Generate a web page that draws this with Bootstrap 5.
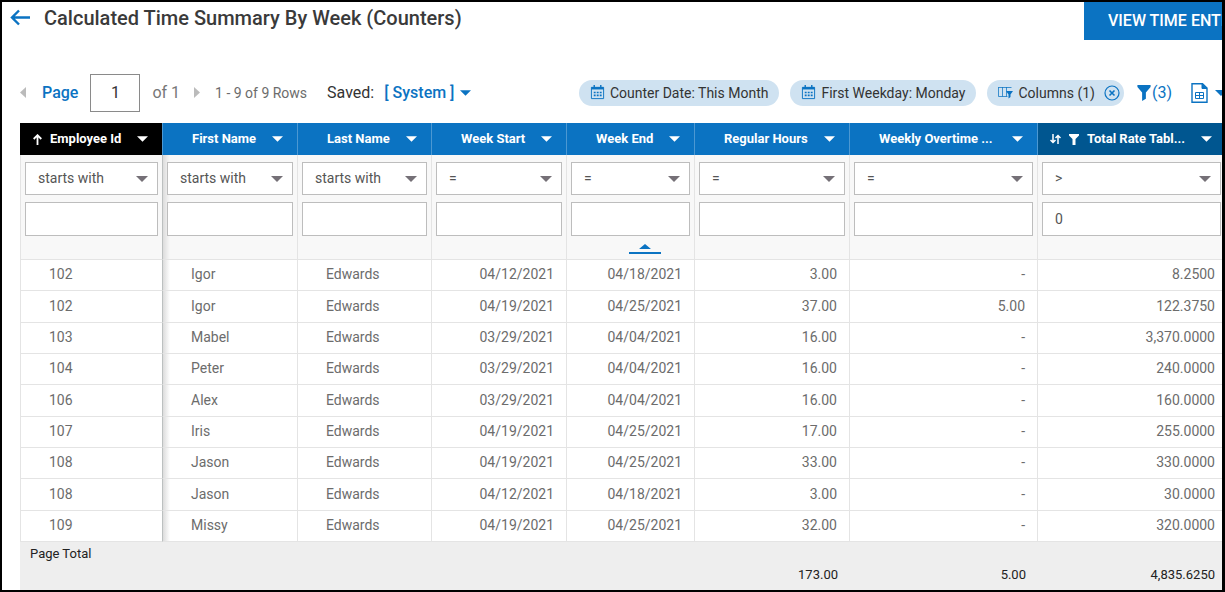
<!DOCTYPE html>
<html lang="en">
<head>
<meta charset="utf-8">
<meta name="viewport" content="width=device-width, initial-scale=1">
<title>Calculated Time Summary By Week (Counters)</title>
<link href="https://cdn.jsdelivr.net/npm/bootstrap@5.3.0/dist/css/bootstrap.min.css" rel="stylesheet">
<style>
:root { --brand: #0b73c2; --brand-dark: #005690; --rule: #e4e4e4; --muted: #6c6c6c; }
body { font-family: Roboto, "Liberation Sans", sans-serif; font-size: 14px; line-height: 20px; color: #333; }
.frame { border: 2px solid #000; border-right-width: 3px; min-height: 100vh; overflow: hidden; }
.page-head { height: 38px; }
.page-title { font-size: 20px; line-height: 33px; font-weight: 500; color: #3a3a3a; }
.action-slot { width: 138px; overflow: hidden; }
.btn-action { --bs-btn-color: #fff; --bs-btn-bg: var(--brand); --bs-btn-border-color: var(--brand); --bs-btn-hover-color: #fff; --bs-btn-hover-bg: var(--brand-dark); --bs-btn-border-radius: 0; --bs-btn-font-weight: 500; --bs-btn-font-size: 16px; --bs-btn-padding-x: 23px; --bs-btn-padding-y: 0; height: 38px; }
.tools { margin-top: 33px; margin-bottom: 11px; height: 39px; }
.tools-left { font-size: 16px; }
.btn-bare { border: 0; background: none; padding: 0; color: inherit; display: inline-flex; align-items: center; flex-shrink: 0; }
.brand { color: var(--brand); text-decoration: none; }
.strong-text { font-weight: 500; }
.page-box { width: 50px; height: 38px; border: 1px solid #8a8a8a; border-radius: 0; padding: 0; margin: 0 12px; text-align: center; font-size: 16px; color: #333; }
.row-of { color: #777; }
.next-page { margin: 0 14px; }
.row-count { font-size: 14px; color: var(--muted); margin-right: 20px; }
.saved-label { margin-right: 10px; }
.saved-menu { gap: 6px; }
.chip { height: 26px; border-radius: 13px; background: #cfe2f1; padding: 0 11px; gap: 5px; color: #333; white-space: nowrap; font-size: 14px; }
.chips { gap: 11px; }
.filter-btn { font-size: 16px; gap: 1px; margin: 0 19px 0 13px; }
.menu-slot { width: 31px; overflow: hidden; gap: 7px; }
.grid-wrap { padding-left: 18px; }
.grid { table-layout: fixed; width: 100%; border-collapse: separate; border-spacing: 0; margin: 0; }
.grid th, .grid td { padding: 0; }
.grid thead .heads th { height: 32px; background: var(--brand); color: #fff; font-weight: 700; font-size: 13px; border-left: 1px solid #4c98d2; }
.grid thead .heads th.sorted { background: #000; border-left-color: #000; }
.grid thead .heads th.filtered { background: var(--brand-dark); }
.head-in { padding: 0 14px 0 29px; white-space: nowrap; }
.sorted .head-in { padding-left: 12px; }
.filtered .head-in { padding: 0 10px 0 12px; }
.filters td { height: 105px; background: #f8f8f8; border-left: 1px solid var(--rule); border-bottom: 1px solid var(--rule); vertical-align: top; position: relative; }
.filter-in { padding: 7px 4px 0; display: grid; gap: 7px; }
.filters td:last-child .filter-in { padding-right: 1px; }
.filters .form-select, .filters .form-control { border: 1px solid #bdbdbd; border-radius: 0; font-size: 14px; line-height: 20px; color: #555; padding: 0 12px 1px; background-color: #fff; }
.filters .form-select { height: 33px; background-image: url("data:image/svg+xml,%3csvg xmlns='http://www.w3.org/2000/svg' viewBox='0 0 12 6'%3e%3cpath d='M0 0h12L6 6z' fill='%23757077'/%3e%3c/svg%3e"); background-size: 12px 6px; background-position: right 9px center; }
.filters .form-control { height: 34px; }
.drop-mark { position: absolute; right: 33px; bottom: 5px; }
.rows td { height: 31px; padding: 0 12px 2px 28px; border-left: 1px solid var(--rule); border-bottom: 1px solid var(--rule); color: var(--muted); vertical-align: middle; }
.rows tr:nth-child(3n+2) td { height: 32px; }
.grid tr > .num { text-align: right; }
.grid tr > .num:last-child { padding-right: 7px; }
.filters td:nth-child(2), .rows td:nth-child(2) { border-left-color: #bcc0c0; background-image: linear-gradient(90deg, #dcdcdc, #fff0 7px); }
.totals td { background: #eee; color: #222; height: 22px; font-size: 13px; }
.totals .total-label { padding: 1px 0 0 10px; }
.totals .num { padding: 0 11px 5px 0; height: 26px; vertical-align: bottom; }
</style>
</head>
<body>
<div class="frame">
  <header class="page-head d-flex align-items-start ps-2">
    <a class="brand d-flex mt-1 me-2" href="#" aria-label="Back">
      <svg width="22" height="22" viewBox="0 0 22 22" fill="none" stroke="currentColor" stroke-width="2.4"><path d="M20 11.500H2M9 4.500L2 11.500l7 7"/></svg>
    </a>
    <h1 class="page-title mb-0 ms-1">Calculated Time Summary By Week (Counters)</h1>
    <div class="action-slot ms-auto"><button type="button" class="btn btn-action text-nowrap">VIEW TIME ENTRIES</button></div>
  </header>

  <div class="tools d-flex align-items-center ps-3">
    <div class="tools-left d-flex align-items-center">
      <button type="button" class="btn-bare me-3" aria-label="Previous page"><svg width="8" height="12" viewBox="0 0 8 12"><path d="M8 0v11L2 5.500z" fill="#bbb"/></svg></button>
      <label class="brand strong-text" for="pageNo">Page</label>
      <input id="pageNo" class="page-box" type="text" value="1">
      <span class="row-of">of 1</span>
      <button type="button" class="btn-bare next-page" aria-label="Next page"><svg width="7" height="12" viewBox="0 0 7 12"><path d="M0 0v11l6-5.500z" fill="#bbb"/></svg></button>
      <span class="row-count">1 - 9 of 9 Rows</span>
      <span class="saved-label">Saved:</span>
      <button type="button" class="btn-bare brand strong-text saved-menu">[ System ]<svg width="11" height="6" viewBox="0 0 12 6"><path d="M0 0h12L6 6z" fill="currentColor"/></svg></button>
    </div>
    <div class="d-flex align-items-center ms-auto">
      <div class="chips d-flex align-items-center">
        <button type="button" class="btn-bare chip"><svg class="brand" width="15" height="15" viewBox="0 0 16 16" fill="none" stroke="currentColor"><path d="M1.500 2.500h13v12h-13z"/><path d="M1.500 3.500h13" stroke-width="2.500"/><path d="M4.500 0v3M11.500 0v3" stroke-width="1.500"/><path d="M4 8h8.500M4 11h8.500" stroke-width="1.800" stroke-dasharray="2 1.200"/></svg>Counter Date: This Month</button>
        <button type="button" class="btn-bare chip"><svg class="brand" width="15" height="15" viewBox="0 0 16 16" fill="none" stroke="currentColor"><path d="M1.500 2.500h13v12h-13z"/><path d="M1.500 3.500h13" stroke-width="2.500"/><path d="M4.500 0v3M11.500 0v3" stroke-width="1.500"/><path d="M4 8h8.500M4 11h8.500" stroke-width="1.800" stroke-dasharray="2 1.200"/></svg>First Weekday: Monday</button>
        <div class="chip d-flex align-items-center pe-1">
          <svg class="brand" width="15" height="14" viewBox="0 0 15 14" fill="none" stroke="currentColor"><path d="M.5 1.500h13M.5 1v9.500h9M4.500 1v9.500M8.500 1v9.500" opacity=".75"/><path d="M8 5h7l-2.500 3.500V11l-2 1.500v-4z" fill="currentColor" stroke="none"/></svg>
          <button type="button" class="btn-bare">Columns (1)</button>
          <button type="button" class="btn-bare brand ms-1" aria-label="Remove columns filter"><svg width="16" height="16" viewBox="0 0 16 16" fill="none" stroke="currentColor" stroke-width="1.200"><circle cx="8" cy="8" r="7"/><path d="M5.500 5.500l5 5M10.500 5.500l-5 5" stroke-width="1.600"/></svg></button>
        </div>
      </div>
      <button type="button" class="btn-bare brand filter-btn"><svg width="14" height="16" viewBox="0 0 14 17" fill="currentColor"><path d="M0 0h14v2L9 8v6.500L5 17V8L0 2z"/></svg>(3)</button>
      <button type="button" class="btn-bare brand menu-slot justify-content-start" aria-label="Export"><svg class="flex-shrink-0" width="17" height="20" viewBox="0 0 17 20" fill="none" stroke="currentColor"><path d="M1 .7h10.500L16 5v14.300H1z" stroke-width="1.400"/><path d="M11 .7V5.500h5z" fill="currentColor"/><path d="M4.500 9.500h8v6h-8zM4.500 12.500h8M8.500 9.500v6"/></svg><svg class="flex-shrink-0" width="12" height="6" viewBox="0 0 12 6"><path d="M0 0h12L6 6z" fill="currentColor"/></svg></button>
    </div>
  </div>

  <div class="grid-wrap">
  <table class="grid">
    <colgroup><col style="width:142px"><col style="width:135px"><col style="width:134px"><col style="width:135px"><col style="width:128px"><col style="width:155px"><col style="width:188px"><col></colgroup>
    <thead>
      <tr class="heads" id="heads"></tr>
      <tr class="filters" id="filters"></tr>
    </thead>
    <tbody class="rows" id="rows"></tbody>
    <tfoot class="totals">
      <tr><td colspan="8" class="total-label">Page Total</td></tr>
      <tr><td colspan="5"></td><td class="num">173.00</td><td class="num">5.00</td><td class="num">4,835.6250</td></tr>
    </tfoot>
  </table>
  </div>
</div>
<script src="https://cdn.jsdelivr.net/npm/bootstrap@5.3.0/dist/js/bootstrap.bundle.min.js"></script>
<script>
const columns = [
  ['Employee Id', 'starts with', ''], ['First Name', 'starts with', ''], ['Last Name', 'starts with', ''],
  ['Week Start', '=', ''], ['Week End', '=', ''], ['Regular Hours', '=', ''],
  ['Weekly Overtime ...', '=', ''], ['Total Rate Tabl...', '>', '0']
];
const data = [
  ['102','Igor','Edwards','04/12/2021','04/18/2021','3.00','-','8.2500'],
  ['102','Igor','Edwards','04/19/2021','04/25/2021','37.00','5.00','122.3750'],
  ['103','Mabel','Edwards','03/29/2021','04/04/2021','16.00','-','3,370.0000'],
  ['104','Peter','Edwards','03/29/2021','04/04/2021','16.00','-','240.0000'],
  ['106','Alex','Edwards','03/29/2021','04/04/2021','16.00','-','160.0000'],
  ['107','Iris','Edwards','04/19/2021','04/25/2021','17.00','-','255.0000'],
  ['108','Jason','Edwards','04/19/2021','04/25/2021','33.00','-','330.0000'],
  ['108','Jason','Edwards','04/12/2021','04/18/2021','3.00','-','30.0000'],
  ['109','Missy','Edwards','04/19/2021','04/25/2021','32.00','-','320.0000']
];
const caret = '<svg width="11" height="6" viewBox="0 0 12 6"><path d="M0 0h12L6 6z" fill="currentColor"/></svg>';
const up = '<svg class="me-2" width="9" height="11" viewBox="0 0 9 11" fill="none" stroke="currentColor" stroke-width="1.800"><path d="M4.500 11V1.500M.7 5l3.800-3.800L8.300 5"/></svg>';
const sortFilter = '<svg class="me-2" width="11" height="10" viewBox="0 0 11 10" fill="none" stroke="currentColor" stroke-width="1.500"><path d="M3 0v8M.5 6L3 8.500 5.500 6M8 10V2M5.500 4L8 1.500 10.500 4"/></svg><svg class="me-2" width="10" height="11" viewBox="0 0 10 11" fill="currentColor"><path d="M0 0h10v1.500L6.500 5v6h-3V5L0 1.500z"/></svg>';
const esc = s => s.replace('>', '&gt;');
document.getElementById('heads').innerHTML = columns.map(([name], i) => {
  const cls = i === 0 ? 'sorted' : i === 7 ? 'filtered' : '';
  const lead = i === 0 ? up : i === 7 ? sortFilter : '';
  return `<th scope="col" class="${cls}"><div class="head-in d-flex align-items-center">${lead}<span>${name}</span><button type="button" class="btn-bare ms-auto" aria-label="${name} menu">${caret}</button></div></th>`;
}).join('');
document.getElementById('filters').innerHTML = columns.map(([name, op, val], i) =>
  `<td><div class="filter-in"><select class="form-select" aria-label="${name} operator"><option>${esc(op)}</option></select><input class="form-control" type="text" value="${val}" aria-label="${name} value"></div>${i === 4 ? '<svg class="drop-mark" width="32" height="10" viewBox="0 0 32 10" fill="#0b73c2"><path d="M16 0l6 5H10zM0 8h32v2H0z"/></svg>' : ''}</td>`).join('');
document.getElementById('rows').innerHTML = data.map(r =>
  '<tr>' + r.map((v, i) => `<td class="${i > 2 ? 'num' : ''}">${v}</td>`).join('') + '</tr>').join('');
</script>
</body>
</html>
